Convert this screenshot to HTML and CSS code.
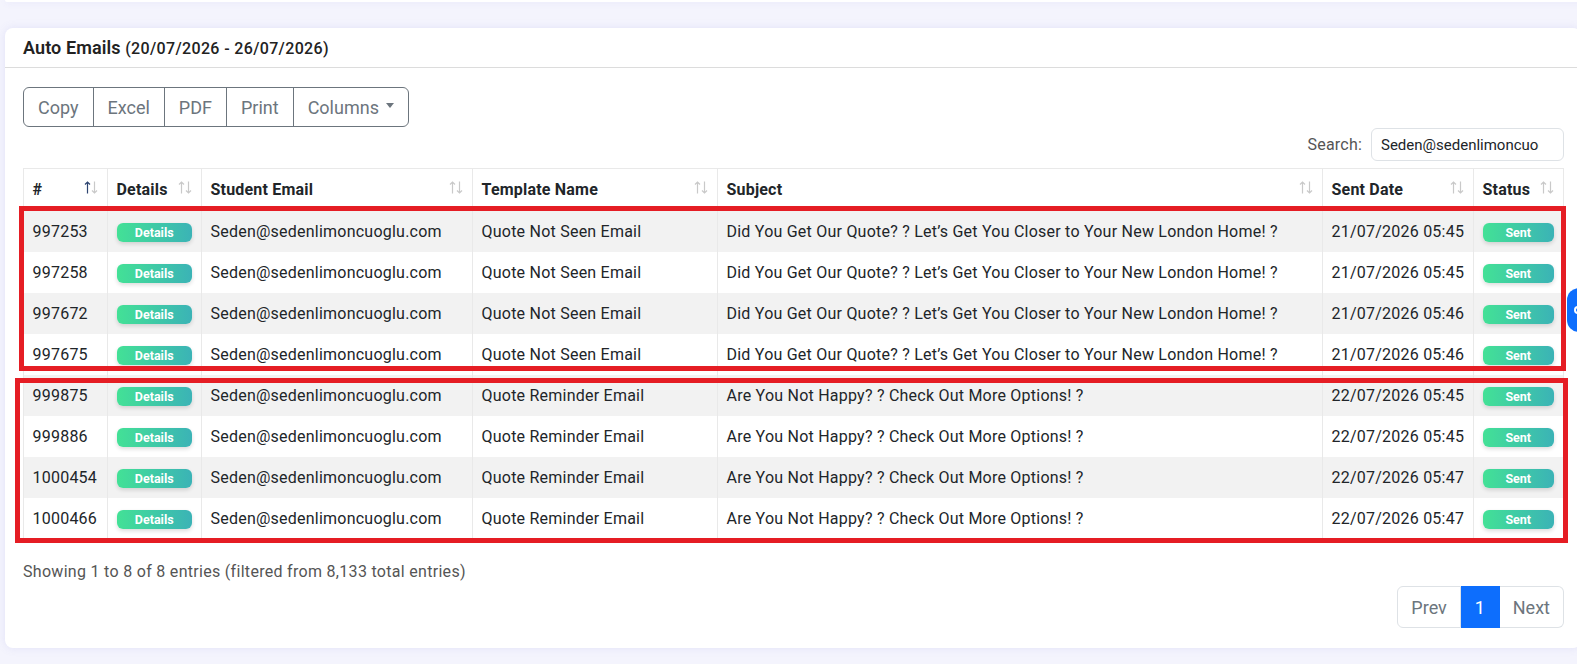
FILE: index.html
```html
<!DOCTYPE html>
<html>
<head>
<meta charset="utf-8">
<link rel="stylesheet" href="styles.css">
</head>
<body>
<div class="page">
  <div class="topcard"></div>
  <div class="card">
    <div class="card-header">
      <div class="title">Auto Emails <span class="range">(20/07/2026 - 26/07/2026)</span></div>
    </div>
    <div class="card-body">
      <div class="dt-buttons">
        <span class="btn">Copy</span><span class="btn">Excel</span><span class="btn">PDF</span><span class="btn">Print</span><span class="btn">Columns<span class="caret"></span></span>
      </div>
      <div class="dt-search">
        <label class="search-label">Search:</label>
        <input class="search-input" type="text" value="Seden@sedenlimoncuoglu.com">
      </div>
      <table class="dt">
        <colgroup>
          <col class="c-id"><col class="c-det"><col class="c-mail"><col class="c-tpl"><col class="c-sub"><col class="c-date"><col class="c-stat">
        </colgroup>
        <thead>
          <tr>
            <th><div class="th-in"><span>#</span><svg class="sort" viewBox="0 0 14 13"><path class="up on" d="M3.5 12.5V1M1 3.5L3.5 1L6 3.5"/><path class="dn" d="M10.5 0.5V12M8 9.5L10.5 12L13 9.5"/></svg></div></th>
            <th><div class="th-in"><span>Details</span><svg class="sort" viewBox="0 0 14 13"><path class="up" d="M3.5 12.5V1M1 3.5L3.5 1L6 3.5"/><path class="dn" d="M10.5 0.5V12M8 9.5L10.5 12L13 9.5"/></svg></div></th>
            <th><div class="th-in"><span>Student Email</span><svg class="sort" viewBox="0 0 14 13"><path class="up" d="M3.5 12.5V1M1 3.5L3.5 1L6 3.5"/><path class="dn" d="M10.5 0.5V12M8 9.5L10.5 12L13 9.5"/></svg></div></th>
            <th><div class="th-in"><span>Template Name</span><svg class="sort" viewBox="0 0 14 13"><path class="up" d="M3.5 12.5V1M1 3.5L3.5 1L6 3.5"/><path class="dn" d="M10.5 0.5V12M8 9.5L10.5 12L13 9.5"/></svg></div></th>
            <th><div class="th-in"><span>Subject</span><svg class="sort" viewBox="0 0 14 13"><path class="up" d="M3.5 12.5V1M1 3.5L3.5 1L6 3.5"/><path class="dn" d="M10.5 0.5V12M8 9.5L10.5 12L13 9.5"/></svg></div></th>
            <th><div class="th-in"><span>Sent Date</span><svg class="sort" viewBox="0 0 14 13"><path class="up" d="M3.5 12.5V1M1 3.5L3.5 1L6 3.5"/><path class="dn" d="M10.5 0.5V12M8 9.5L10.5 12L13 9.5"/></svg></div></th>
            <th><div class="th-in"><span>Status</span><svg class="sort" viewBox="0 0 14 13"><path class="up" d="M3.5 12.5V1M1 3.5L3.5 1L6 3.5"/><path class="dn" d="M10.5 0.5V12M8 9.5L10.5 12L13 9.5"/></svg></div></th>
          </tr>
        </thead>
        <tbody>
          <tr><td>997253</td><td><span class="badge">Details</span></td><td>Seden@sedenlimoncuoglu.com</td><td>Quote Not Seen Email</td><td>Did You Get Our Quote? ? Let’s Get You Closer to Your New London Home! ?</td><td>21/07/2026 05:45</td><td><span class="badge">Sent</span></td></tr>
          <tr><td>997258</td><td><span class="badge">Details</span></td><td>Seden@sedenlimoncuoglu.com</td><td>Quote Not Seen Email</td><td>Did You Get Our Quote? ? Let’s Get You Closer to Your New London Home! ?</td><td>21/07/2026 05:45</td><td><span class="badge">Sent</span></td></tr>
          <tr><td>997672</td><td><span class="badge">Details</span></td><td>Seden@sedenlimoncuoglu.com</td><td>Quote Not Seen Email</td><td>Did You Get Our Quote? ? Let’s Get You Closer to Your New London Home! ?</td><td>21/07/2026 05:46</td><td><span class="badge">Sent</span></td></tr>
          <tr><td>997675</td><td><span class="badge">Details</span></td><td>Seden@sedenlimoncuoglu.com</td><td>Quote Not Seen Email</td><td>Did You Get Our Quote? ? Let’s Get You Closer to Your New London Home! ?</td><td>21/07/2026 05:46</td><td><span class="badge">Sent</span></td></tr>
          <tr><td>999875</td><td><span class="badge">Details</span></td><td>Seden@sedenlimoncuoglu.com</td><td>Quote Reminder Email</td><td>Are You Not Happy? ? Check Out More Options! ?</td><td>22/07/2026 05:45</td><td><span class="badge">Sent</span></td></tr>
          <tr><td>999886</td><td><span class="badge">Details</span></td><td>Seden@sedenlimoncuoglu.com</td><td>Quote Reminder Email</td><td>Are You Not Happy? ? Check Out More Options! ?</td><td>22/07/2026 05:45</td><td><span class="badge">Sent</span></td></tr>
          <tr><td>1000454</td><td><span class="badge">Details</span></td><td>Seden@sedenlimoncuoglu.com</td><td>Quote Reminder Email</td><td>Are You Not Happy? ? Check Out More Options! ?</td><td>22/07/2026 05:47</td><td><span class="badge">Sent</span></td></tr>
          <tr><td>1000466</td><td><span class="badge">Details</span></td><td>Seden@sedenlimoncuoglu.com</td><td>Quote Reminder Email</td><td>Are You Not Happy? ? Check Out More Options! ?</td><td>22/07/2026 05:47</td><td><span class="badge">Sent</span></td></tr>
        </tbody>
      </table>
      <div class="dt-info">Showing 1 to 8 of 8 entries (filtered from 8,133 total entries)</div>
      <div class="dt-paging">
        <span class="pg">Prev</span><span class="pg active">1</span><span class="pg">Next</span>
      </div>
    </div>
  </div>
  <div class="anno anno-1"></div>
  <div class="anno anno-2"></div>
  <div class="floater"><span class="floater-dot"></span></div>
</div>
</body>
</html>
```
FILE: styles.css
```css
* { box-sizing: border-box; }
html, body { margin: 0; padding: 0; }
body {
  width: 1577px;
  height: 664px;
  overflow: hidden;
  background: #f4f4fd;
  font-family: Roboto, "Liberation Sans", Arial, sans-serif;
  color: #212529;
}
.page { position: relative; padding-left: 5px; height: 664px; }

.topcard {
  width: 1580px;
  height: 2px;
  background: #fff;
  border-radius: 0 0 8px 8px;
  box-shadow: 0 1px 6px rgba(110, 110, 210, 0.14);
}
.card {
  margin-top: 26px;
  width: 1576px;
  background: #fff;
  border-radius: 8px;
  box-shadow: 0 0 10px rgba(110, 110, 210, 0.13);
}
.card-header {
  height: 40px;
  padding: 0 18px;
  display: flex;
  align-items: center;
  border-bottom: 1px solid #dcdcdc;
}
.title { font-size: 18px; font-weight: 600; color: #222; letter-spacing: 0.1px; }
.range { font-size: 16px; font-weight: 500; letter-spacing: 0.35px; }

.card-body { padding: 19px 18px 20px; }

.dt-buttons {
  display: inline-flex;
  border: 1px solid #6c757d;
  border-radius: 6px;
  overflow: hidden;
}
.btn {
  display: inline-flex;
  align-items: center;
  height: 38px;
  padding: 0 14px;
  font-size: 18px;
  color: #6c757d;
  border-left: 1px solid #6c757d;
}
.btn:first-child { border-left: 0; }
.caret {
  margin-left: 7px;
  margin-top: -3px;
  width: 0;
  height: 0;
  border-top: 5px solid #6c757d;
  border-left: 4px solid transparent;
  border-right: 4px solid transparent;
}

.dt-search {
  display: flex;
  justify-content: flex-end;
  align-items: center;
  margin-top: 1px;
  margin-right: -1px;
}
.search-label { font-size: 16px; color: #555; margin-right: 9px; letter-spacing: 0.2px; }
.search-input {
  width: 193px;
  height: 33px;
  border: 1px solid #dee2e6;
  border-radius: 6px;
  padding: 0 24px 0 9px;
  font-family: Roboto, "Liberation Sans", Arial, sans-serif;
  font-size: 15px;
  color: #212529;
  outline: none;
}

.dt {
  margin-top: 7px;
  width: 1540px;
  table-layout: fixed;
  border-collapse: collapse;
  font-size: 16px;
  line-height: 24px;
}
.c-id { width: 84px; }
.c-det { width: 94px; }
.c-mail { width: 271px; }
.c-tpl { width: 245px; }
.c-sub { width: 605px; }
.c-date { width: 151px; }
.c-stat { width: 90px; }

.dt th, .dt td {
  border-left: 1px solid #e9e9e9;
  border-right: 1px solid #e9e9e9;
  text-align: left;
  white-space: nowrap;
  overflow: hidden;
}
.dt th {
  padding: 9px 9px 9px 8.5px;
  border-top: 1px solid #e9e9e9;
  font-weight: 700;
  letter-spacing: 0.2px;
}
.dt td { padding: 9px 9px 8px 8.5px; letter-spacing: 0.23px; }
.dt tbody tr:nth-child(odd) td { background: #f2f2f2; }

.th-in { display: flex; justify-content: space-between; align-items: center; }
.sort {
  width: 14px;
  height: 13px;
  margin-bottom: 5px;
  fill: none;
  stroke: #c9c9c9;
  stroke-width: 1.2;
  flex: none;
}
.sort .on { stroke: #2d4470; }

.badge {
  display: block;
  height: 19px;
  margin-top: 1px;
  border-radius: 6px;
  background: linear-gradient(90deg, #43e196, #3bb3b6);
  box-shadow: 0 2px 4px rgba(0, 0, 0, 0.14);
  color: #fff;
  font-size: 12.5px;
  font-weight: 700;
  line-height: 19px;
  letter-spacing: 0;
  text-align: center;
}

.dt-info {
  margin-top: 21px;
  font-size: 16px;
  line-height: 24px;
  color: #555;
  letter-spacing: 0.3px;
}
.dt-paging {
  margin-top: 2px;
  display: flex;
  justify-content: flex-end;
  margin-right: -1px;
}
.pg {
  display: inline-flex;
  align-items: center;
  justify-content: center;
  height: 42px;
  padding: 0 13px;
  font-size: 18px;
  color: #6c757d;
  border: 1px solid #dee2e6;
  border-left: 0;
}
.pg:first-child { border-left: 1px solid #dee2e6; border-radius: 6px 0 0 6px; }
.pg:last-child { border-radius: 0 6px 6px 0; }
.pg.active { width: 39px; background: #0d6efd; border-color: #0d6efd; color: #fff; }

.anno { position: absolute; border: 5px solid #e51d24; }
.anno-1 { left: 19px; top: 206px; width: 1547px; height: 165px; }
.anno-2 { left: 15px; top: 378px; width: 1553px; height: 165px; }

.floater {
  position: absolute;
  left: 1567px;
  top: 288px;
  width: 40px;
  height: 44px;
  border-radius: 12px;
  background: #0d6efd;
}
.floater-dot {
  position: absolute;
  left: 7px;
  top: 18px;
  width: 8px;
  height: 8px;
  border: 2px solid #fff;
  border-radius: 50%;
}
```
